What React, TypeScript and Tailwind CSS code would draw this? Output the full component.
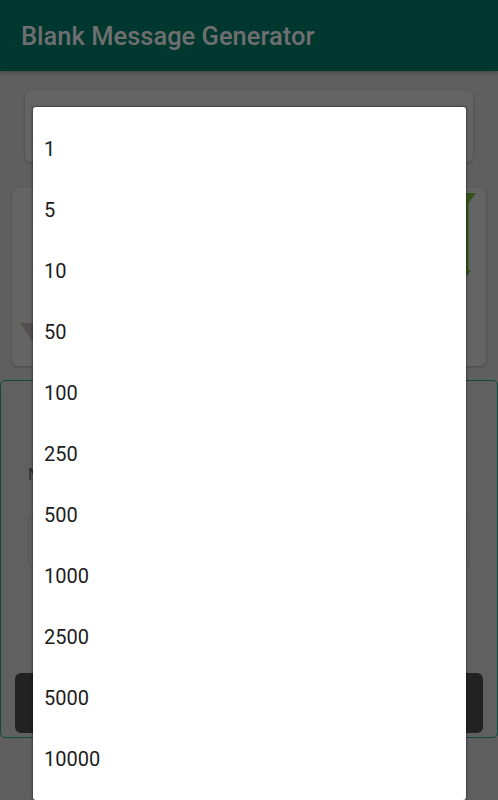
import React from 'react';

const COUNTS = ['1', '5', '10', '50', '100', '250', '500', '1000', '2500', '5000', '10000'];

const font = { fontFamily: 'Roboto, "Noto Sans", sans-serif' };

function BannerArt() {
    // mostly covered by the popup, only the green edge peeks out
    return (
        <svg width="96" height="88" viewBox="0 0 96 88" className="shrink-0">
            <polygon points="86,0 96,0 88.5,10 88.5,77 91,77 86,85" fill="#36521b" />
        </svg>
    );
}

export default function App() {
    return (
        <div className="relative h-[800px] w-full overflow-hidden bg-[#5f5f5f]" style={font}>
            <header className="h-[71px] bg-[#00382f] flex items-center px-[21px] pt-[2px] shadow-[0_2px_4px_rgba(0,0,0,0.25)]">
                <h1 className="text-[25.5px] font-medium text-[#6f6f6f]">Blank Message Generator</h1>
            </header>

            <div className="flex flex-col">
                <div className="mx-[25px] mt-[19px] h-[72px] rounded-[6px] bg-[#646464] shadow-[0_1px_3px_rgba(0,0,0,0.25)]" />

                <div className="mx-[12px] mt-[26px] h-[178px] rounded-[6px] bg-[#646464] shadow-[0_1px_3px_rgba(0,0,0,0.25)] flex flex-col">
                    <div className="flex justify-end pt-[5px] pr-[10px]">
                        <BannerArt />
                    </div>
                    <div className="mt-[42px] ml-[8px]">
                        <svg width="14" height="20" viewBox="0 0 14 20">
                            <polygon points="0,0 13,0 13,19" fill="#545050" />
                        </svg>
                    </div>
                </div>

                <div className="mt-[14px] h-[358px] rounded-[5px] border border-[#0d4a40] bg-[#606060] flex flex-col px-[27px]">
                    <div className="mt-[84px] text-[16px] text-[#2a2a2a] leading-[20px]">Number of messages</div>
                    <div className="mt-[30px] h-[52px] rounded-[5px] border border-[#555555]" />
                    <div className="mt-[106px] -mx-[13px] h-[60px] rounded-[6px] bg-[#222222]" />
                </div>
            </div>

            <div className="absolute left-[33px] top-[107px] w-[433px] h-[693px] rounded-[3px] bg-white py-[11px] shadow-[0_0_2px_1px_rgba(0,0,0,0.35)]">
                {COUNTS.map((n) => (
                    <div key={n} className="h-[61px] flex items-center px-[11px] text-[20px] text-[#1c1c1c]">
                        {n}
                    </div>
                ))}
            </div>
        </div>
    );
}
